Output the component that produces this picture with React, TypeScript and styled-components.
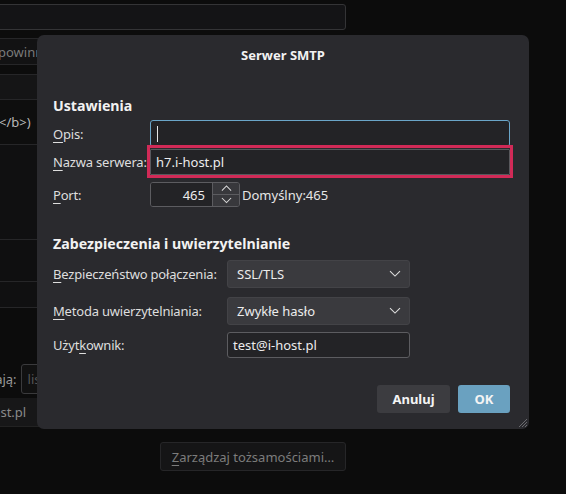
import React from "react";
import styled, { createGlobalStyle } from "styled-components";

const Global = createGlobalStyle`
  html, body { margin: 0; padding: 0; background: #0c0c0c; }
  body { font-family: "Noto Sans", "Open Sans", sans-serif; font-size: 13px; color: #e6e6e6; }
  * { box-sizing: border-box; }
`;

const Page = styled.div`
  position: relative;
  width: 566px;
  height: 494px;
  overflow: hidden;
  background: #0c0c0c;
`;

/* ---------- background window ---------- */
const Back = styled.div`
  display: flex;
  flex-direction: column;
  width: 346px;
  padding-top: 4px;
`;

const TopField = styled.div`
  height: 26px;
  margin-left: -4px;
  width: 350px;
  background: #141416;
  border: 1px solid #343436;
  border-radius: 3px;
`;

const Strip = styled.div<{ $h: number; $bg: string; $mt?: number; $top?: boolean }>`
  height: ${(p) => p.$h}px;
  margin-top: ${(p) => p.$mt ?? 0}px;
  background: ${(p) => p.$bg};
  border-bottom: 1px solid #262628;
  border-top: ${(p) => (p.$top ? "1px solid #262628" : "none")};
  color: #7a7a7a;
  font-size: 13px;
  display: flex;
  align-items: center;
  white-space: nowrap;
  overflow: hidden;
`;

const BackText = styled.span<{ $c?: string; $ml?: number }>`
  color: ${(p) => p.$c ?? "#7a7a7a"};
  margin-left: ${(p) => p.$ml ?? 0}px;
`;

const FieldRow = styled.div`
  display: flex;
  align-items: center;
  gap: 4px;
  height: 30px;
  margin-top: 56px;
  margin-left: -17px;
  color: #9a9a9a;
`;

const BackInput = styled.div`
  flex: 1;
  height: 30px;
  border: 1px solid #3a3a3c;
  border-radius: 3px;
  background: #111;
  color: #555;
  padding-left: 6px;
  display: flex;
  align-items: center;
`;

const AddrRow = styled.div`
  height: 29px;
  margin-top: 4px;
  background: #171718;
  border-bottom: 1px solid #222;
  display: flex;
  align-items: center;
  color: #8a8a8a;
  white-space: nowrap;
  overflow: hidden;
`;

const BackButton = styled.div`
  align-self: flex-end;
  margin-top: 15px;
  width: 186px;
  height: 29px;
  background: #151516;
  border: 1px solid #262628;
  border-radius: 3px;
  color: #7c7c7c;
  display: flex;
  align-items: center;
  justify-content: center;
`;

/* ---------- dialog ---------- */
const Dialog = styled.div`
  position: absolute;
  left: 37px;
  top: 35px;
  width: 492px;
  height: 394px;
  background: #2a2a2e;
  border-radius: 7px;
  display: flex;
  flex-direction: column;
  padding: 0 19px 16px 16px;
`;

const Title = styled.div`
  height: 40px;
  display: flex;
  align-items: center;
  justify-content: center;
  font-weight: 700;
  font-size: 13px;
  color: #f2f2f2;
  padding-left: 3px;
`;

const SectionHead = styled.div<{ $mt: number }>`
  margin-top: ${(p) => p.$mt}px;
  font-weight: 700;
  font-size: 14.2px;
  color: #f2f2f2;
  height: 20px;
  display: flex;
  align-items: center;
`;

const Row = styled.div<{ $label: number; $mt: number; $h: number }>`
  display: grid;
  grid-template-columns: ${(p) => p.$label}px 1fr;
  align-items: center;
  margin-top: ${(p) => p.$mt}px;
  height: ${(p) => p.$h}px;
`;

const Label = styled.span`
  color: #dedede;
  white-space: nowrap;
  letter-spacing: -0.2px;
`;

const U = styled.span`
  text-decoration: underline;
  text-underline-offset: 3px;
  text-decoration-thickness: 1px;
`;

const TextInput = styled.div<{ $focus?: boolean; $w?: number }>`
  height: 100%;
  width: ${(p) => (p.$w ? `${p.$w}px` : "100%")};
  background: #232326;
  border: 1px solid ${(p) => (p.$focus ? "#6aa5c8" : "#5c5c60")};
  border-radius: 3px;
  display: flex;
  align-items: center;
  padding-left: 5px;
  color: #ececec;
`;

const Caret = styled.span`
  display: inline-block;
  width: 1px;
  height: 16px;
  background: #e6e6e6;
  margin-left: 1px;
`;

const Highlight = styled.div`
  margin-left: -3px;
  width: 366px;
  height: 33px;
  border: 3px solid #d12a57;
  padding-top: 1px;
`;

const InnerInput = styled(TextInput)`
  height: 26px;
  width: 360px;
  border-color: #58585c;
  border-radius: 1px;
`;

const PortLine = styled.div`
  display: flex;
  align-items: center;
  height: 100%;
`;

const Spin = styled.div`
  display: flex;
  width: 90px;
  height: 25px;
  border: 1px solid #5c5c60;
  border-radius: 3px;
  overflow: hidden;
`;

const SpinValue = styled.div`
  flex: 1;
  background: #232326;
  display: flex;
  align-items: center;
  justify-content: flex-end;
  padding-right: 7px;
  color: #ececec;
`;

const SpinButtons = styled.div`
  width: 27px;
  border-left: 1px solid #5c5c60;
  display: flex;
  flex-direction: column;
  background: #38383c;
`;

const SpinBtn = styled.div<{ $top?: boolean }>`
  flex: 1;
  display: flex;
  align-items: center;
  justify-content: center;
  border-bottom: ${(p) => (p.$top ? "1px solid #5c5c60" : "none")};
`;

const Hint = styled.span`
  margin-left: 2px;
  color: #e6e6e6;
`;

const Select = styled.div`
  width: 183px;
  height: 28px;
  background: #3a3a3e;
  border: 1px solid #434347;
  border-radius: 3px;
  display: flex;
  align-items: center;
  justify-content: space-between;
  padding: 0 8px 0 9px;
  color: #ececec;
`;

const Footer = styled.div`
  margin-top: auto;
  display: flex;
  justify-content: flex-end;
  gap: 8px;
`;

const Button = styled.div<{ $primary?: boolean; $w: number }>`
  width: ${(p) => p.$w}px;
  height: 28px;
  border-radius: 3px;
  background: ${(p) => (p.$primary ? "#6aa1c0" : "#3c3c40")};
  color: #f4f4f4;
  font-weight: 700;
  display: flex;
  align-items: center;
  justify-content: center;
`;

const Grip = styled.svg`
  position: absolute;
  right: 1px;
  bottom: 1px;
`;

const Chevron = ({ up, size = 12 }: { up?: boolean; size?: number }) => (
  <svg width={size} height={size * 0.6} viewBox="0 0 12 7">
    <path
      d={up ? "M1 6 L6 1 L11 6" : "M1 1 L6 6 L11 1"}
      fill="none"
      stroke="#dcdcdc"
      strokeWidth="1.1"
    />
  </svg>
);

export default function App() {
  return (
    <>
      <Global />
      <Page>
        <Back>
          <TopField />
          <Strip $h={27} $bg="#121213" $mt={8} $top>
            <BackText $ml={-2}>powinna być</BackText>
          </Strip>
          <Strip $h={26} $bg="#151516" $mt={9} $top />
          <Strip $h={45} $bg="#0e0e0e">
            <BackText $c="#b8b8b8" $ml={-1}>{"</b>)"}</BackText>
          </Strip>
          <Strip $h={95} $bg="#101011" />
          <Strip $h={42} $bg="#0f0f10" />
          <Strip $h={26} $bg="#101011" />
          <FieldRow>
            <span>mają:</span>
            <BackInput>lista</BackInput>
          </FieldRow>
          <AddrRow>
            <BackText $c="#8a8a8a" $ml={-23}>i-host.pl</BackText>
          </AddrRow>
          <BackButton>
            <span>
              <U>Z</U>arządzaj tożsamościami…
            </span>
          </BackButton>
        </Back>

        <Dialog>
          <Title>Serwer SMTP</Title>
          <SectionHead $mt={20}>Ustawienia</SectionHead>

          <Row $label={97} $mt={5} $h={27}>
            <Label>
              <U>O</U>pis:
            </Label>
            <TextInput $focus>
              <Caret />
            </TextInput>
          </Row>

          <Row $label={97} $mt={-2} $h={33}>
            <Label>
              <U>N</U>azwa serwera:
            </Label>
            <Highlight>
              <InnerInput>h7.i-host.pl</InnerInput>
            </Highlight>
          </Row>

          <Row $label={97} $mt={4} $h={25}>
            <Label>
              <U>P</U>ort:
            </Label>
            <PortLine>
              <Spin>
                <SpinValue>465</SpinValue>
                <SpinButtons>
                  <SpinBtn $top>
                    <Chevron up size={11} />
                  </SpinBtn>
                  <SpinBtn>
                    <Chevron size={11} />
                  </SpinBtn>
                </SpinButtons>
              </Spin>
              <Hint>Domyślny:465</Hint>
            </PortLine>
          </Row>

          <SectionHead $mt={26}>Zabezpieczenia i uwierzytelnianie</SectionHead>

          <Row $label={174} $mt={7} $h={28}>
            <Label>
              <U>B</U>ezpieczeństwo połączenia:
            </Label>
            <Select>
              <span>SSL/TLS</span>
              <Chevron />
            </Select>
          </Row>

          <Row $label={174} $mt={9} $h={28}>
            <Label>
              <U>M</U>etoda uwierzytelniania:
            </Label>
            <Select>
              <span>Zwykłe hasło</span>
              <Chevron />
            </Select>
          </Row>

          <Row $label={174} $mt={7} $h={26}>
            <Label>
              Użyt<U>k</U>ownik:
            </Label>
            <TextInput $w={183}>test@i-host.pl</TextInput>
          </Row>

          <Footer>
            <Button $w={73}>Anuluj</Button>
            <Button $w={52} $primary>
              OK
            </Button>
          </Footer>

          <Grip width="11" height="11" viewBox="0 0 11 11">
            <path
              d="M10 2 L2 10 M10 5 L5 10 M10 8 L8 10"
              stroke="#6a6a6e"
              strokeWidth="1"
            />
          </Grip>
        </Dialog>
      </Page>
    </>
  );
}
